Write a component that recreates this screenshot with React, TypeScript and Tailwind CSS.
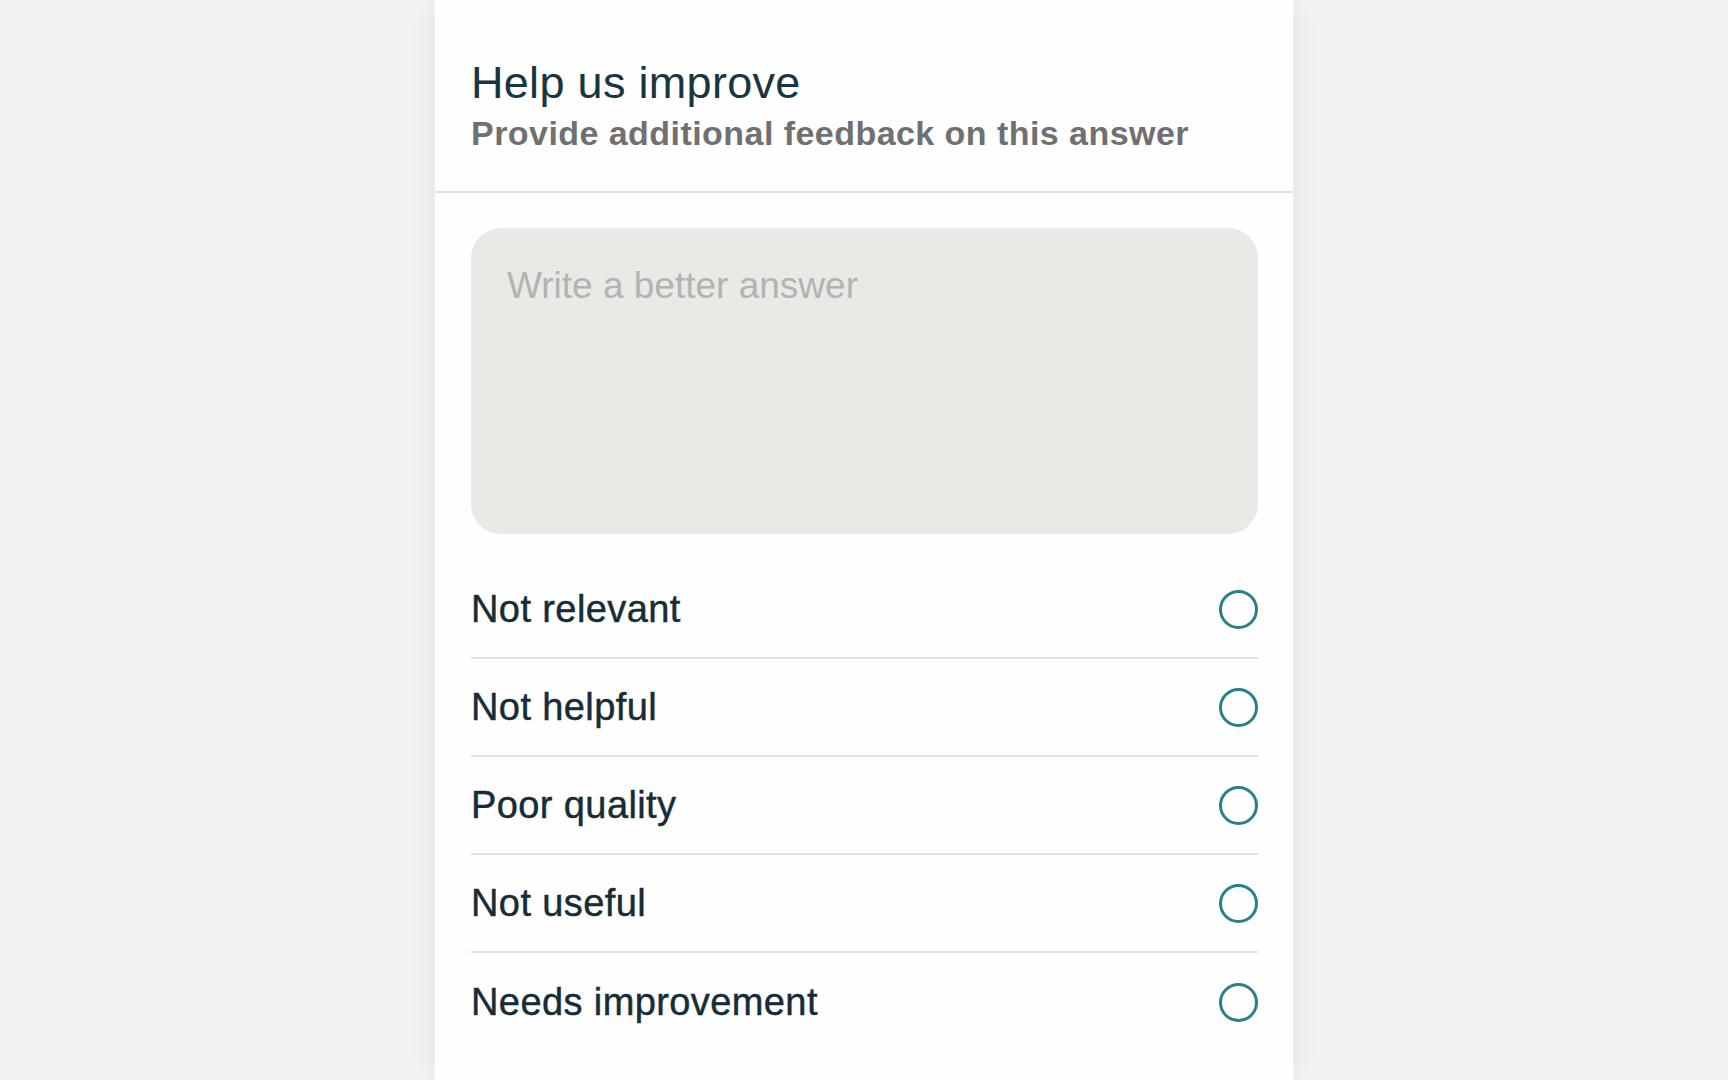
import React from "react";

const reasons = [
  "Not relevant",
  "Not helpful",
  "Poor quality",
  "Not useful",
  "Needs improvement",
];

export default function App() {
  return (
    <div
      className="min-h-screen w-full bg-[#f2f2f2] flex justify-center"
      style={{ fontFamily: '"Liberation Sans", Arial, sans-serif' }}
    >
      <div className="w-[858px] min-h-screen bg-[#fefefe] shadow-[0_0_28px_rgba(0,0,0,0.06)] flex flex-col">
        <div className="px-[36px] pt-[60px] pb-[41px] border-b-2 border-[#e1e1e1]">
          <h1 className="text-[45px] leading-[45px] tracking-[0.3px] text-[#19363f] font-normal">
            Help us improve
          </h1>
          <p className="mt-[11px] text-[34px] leading-[34px] font-bold tracking-[0.45px] text-[#707070]">
            Provide additional feedback on this answer
          </p>
        </div>
        <div className="pl-[36px] pr-[35px] pt-[35px] flex flex-col">
          <textarea
            className="h-[306px] w-full resize-none rounded-[30px] bg-[#e9e9e6] pl-[36px] pr-[37px] pt-[37px] text-[37px] leading-[42px] text-[#1a2e38] outline-none placeholder:text-[#b3b3b0]"
            placeholder="Write a better answer"
          />
          <div className="mt-[27px] flex flex-col">
            {reasons.map((r, i) => (
              <label
                key={r}
                className={`flex h-[98px] items-center justify-between ${
                  i < reasons.length - 1 ? "border-b-2 border-[#e3e3e3]" : ""
                }`}
              >
                <span className="text-[38px] tracking-[0.4px] text-[#172c36] [-webkit-text-stroke:0.45px_#172c36]">
                  {r}
                </span>
                <span className="block h-[39px] w-[39px] rounded-full border-[3px] border-[#2a8088]" />
              </label>
            ))}
          </div>
        </div>
      </div>
    </div>
  );
}
